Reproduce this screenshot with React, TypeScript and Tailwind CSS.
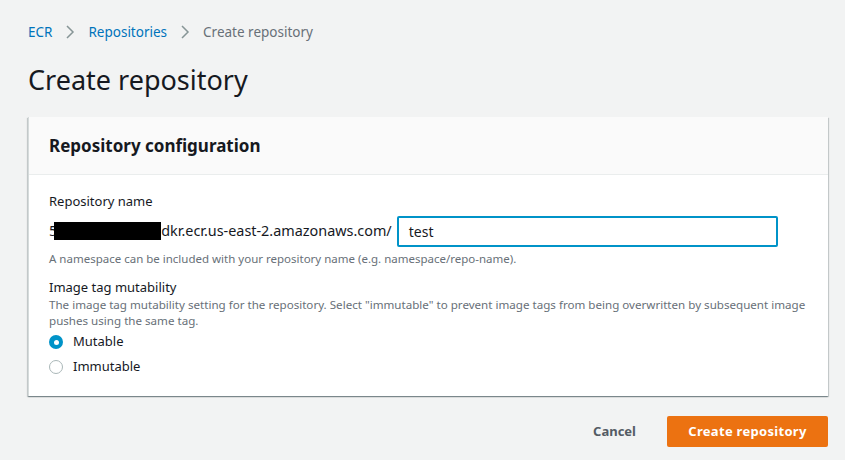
import React from "react";

export default function App() {
  return (
    <div
      className="w-[845px] h-[460px] bg-[#f2f3f3] overflow-hidden text-[#16191f]"
      style={{ fontFamily: '"Noto Sans", "Open Sans", sans-serif' }}
    >
      <div className="pl-[28px] pr-[17px]">
        <nav className="flex items-center h-[20px] mt-[22px] text-[13.5px]">
          <span className="text-[#0073bb]">ECR</span>
          <svg width="12" height="14" viewBox="0 0 12 14" className="mx-[12px]" fill="none">
            <path d="M3 1l6 6-6 6" stroke="#879596" strokeWidth="1.5" />
          </svg>
          <span className="text-[#0073bb]">Repositories</span>
          <svg width="12" height="14" viewBox="0 0 12 14" className="mx-[12px]" fill="none">
            <path d="M3 1l6 6-6 6" stroke="#879596" strokeWidth="1.5" />
          </svg>
          <span className="text-[#687078]">Create repository</span>
        </nav>
        <h1 className="mt-[19px] text-[27px] leading-[38px] font-normal">Create repository</h1>
        <div className="mt-[18px] bg-white border-l border-[#d5dbdb] shadow-[0_1px_1px_0_rgba(0,28,36,0.3),1px_1px_1px_0_rgba(0,28,36,0.15),-1px_1px_1px_0_rgba(0,28,36,0.15)]">
          <div className="h-[58px] bg-[#fafafa] border-b border-[#eaeded] flex items-center px-[20px]">
            <h2 className="text-[17px] font-bold leading-[22px]">Repository configuration</h2>
          </div>
          <div className="pl-[20px] pr-[12px] pt-[16px] pb-[18px]">
            <div className="text-[13px] leading-[20px]">Repository name</div>
            <div className="flex items-center mt-[5px] h-[30px]">
              <span className="text-[14.4px]">5</span>
              <span className="inline-block w-[107px] h-[18px] bg-black -ml-[3px]"></span>
              <span className="text-[14.4px]">dkr.ecr.us-east-2.amazonaws.com/</span>
              <div className="ml-[5px] w-[381px] h-[31px] border-2 border-[#0093c8] rounded-[2px] flex items-center px-[10px] text-[14px]">
                test
              </div>
            </div>
            <div className="text-[11.5px] text-[#687078] leading-[16px] mt-[5px]">
              A namespace can be included with your repository name (e.g. namespace/repo-name).
            </div>
            <div className="text-[13px] leading-[20px] mt-[10px]">Image tag mutability</div>
            <div className="text-[11.6px] text-[#687078] leading-[16px]">
              The image tag mutability setting for the repository. Select "immutable" to prevent image tags from being overwritten by subsequent image pushes using the same tag.
            </div>
            <div className="flex items-center mt-[2px] h-[22px] text-[13px]">
              <span className="w-[14px] h-[14px] rounded-full bg-[#0093c8] flex items-center justify-center">
                <span className="w-[5px] h-[5px] rounded-full bg-white"></span>
              </span>
              <span className="ml-[10px]">Mutable</span>
            </div>
            <div className="flex items-center mt-[3px] h-[22px] text-[13px]">
              <span className="w-[14px] h-[14px] rounded-full border border-[#aab7b8] bg-white"></span>
              <span className="ml-[10px]">Immutable</span>
            </div>
          </div>
        </div>
        <div className="flex justify-end items-center mt-[20px] gap-[31px]">
          <span className="text-[13px] font-bold text-[#545b64]">Cancel</span>
          <button className="w-[161px] h-[31px] bg-[#ec7211] rounded-[2px] text-white text-[13px] font-bold tracking-[0.3px]">
            Create repository
          </button>
        </div>
      </div>
    </div>
  );
}
